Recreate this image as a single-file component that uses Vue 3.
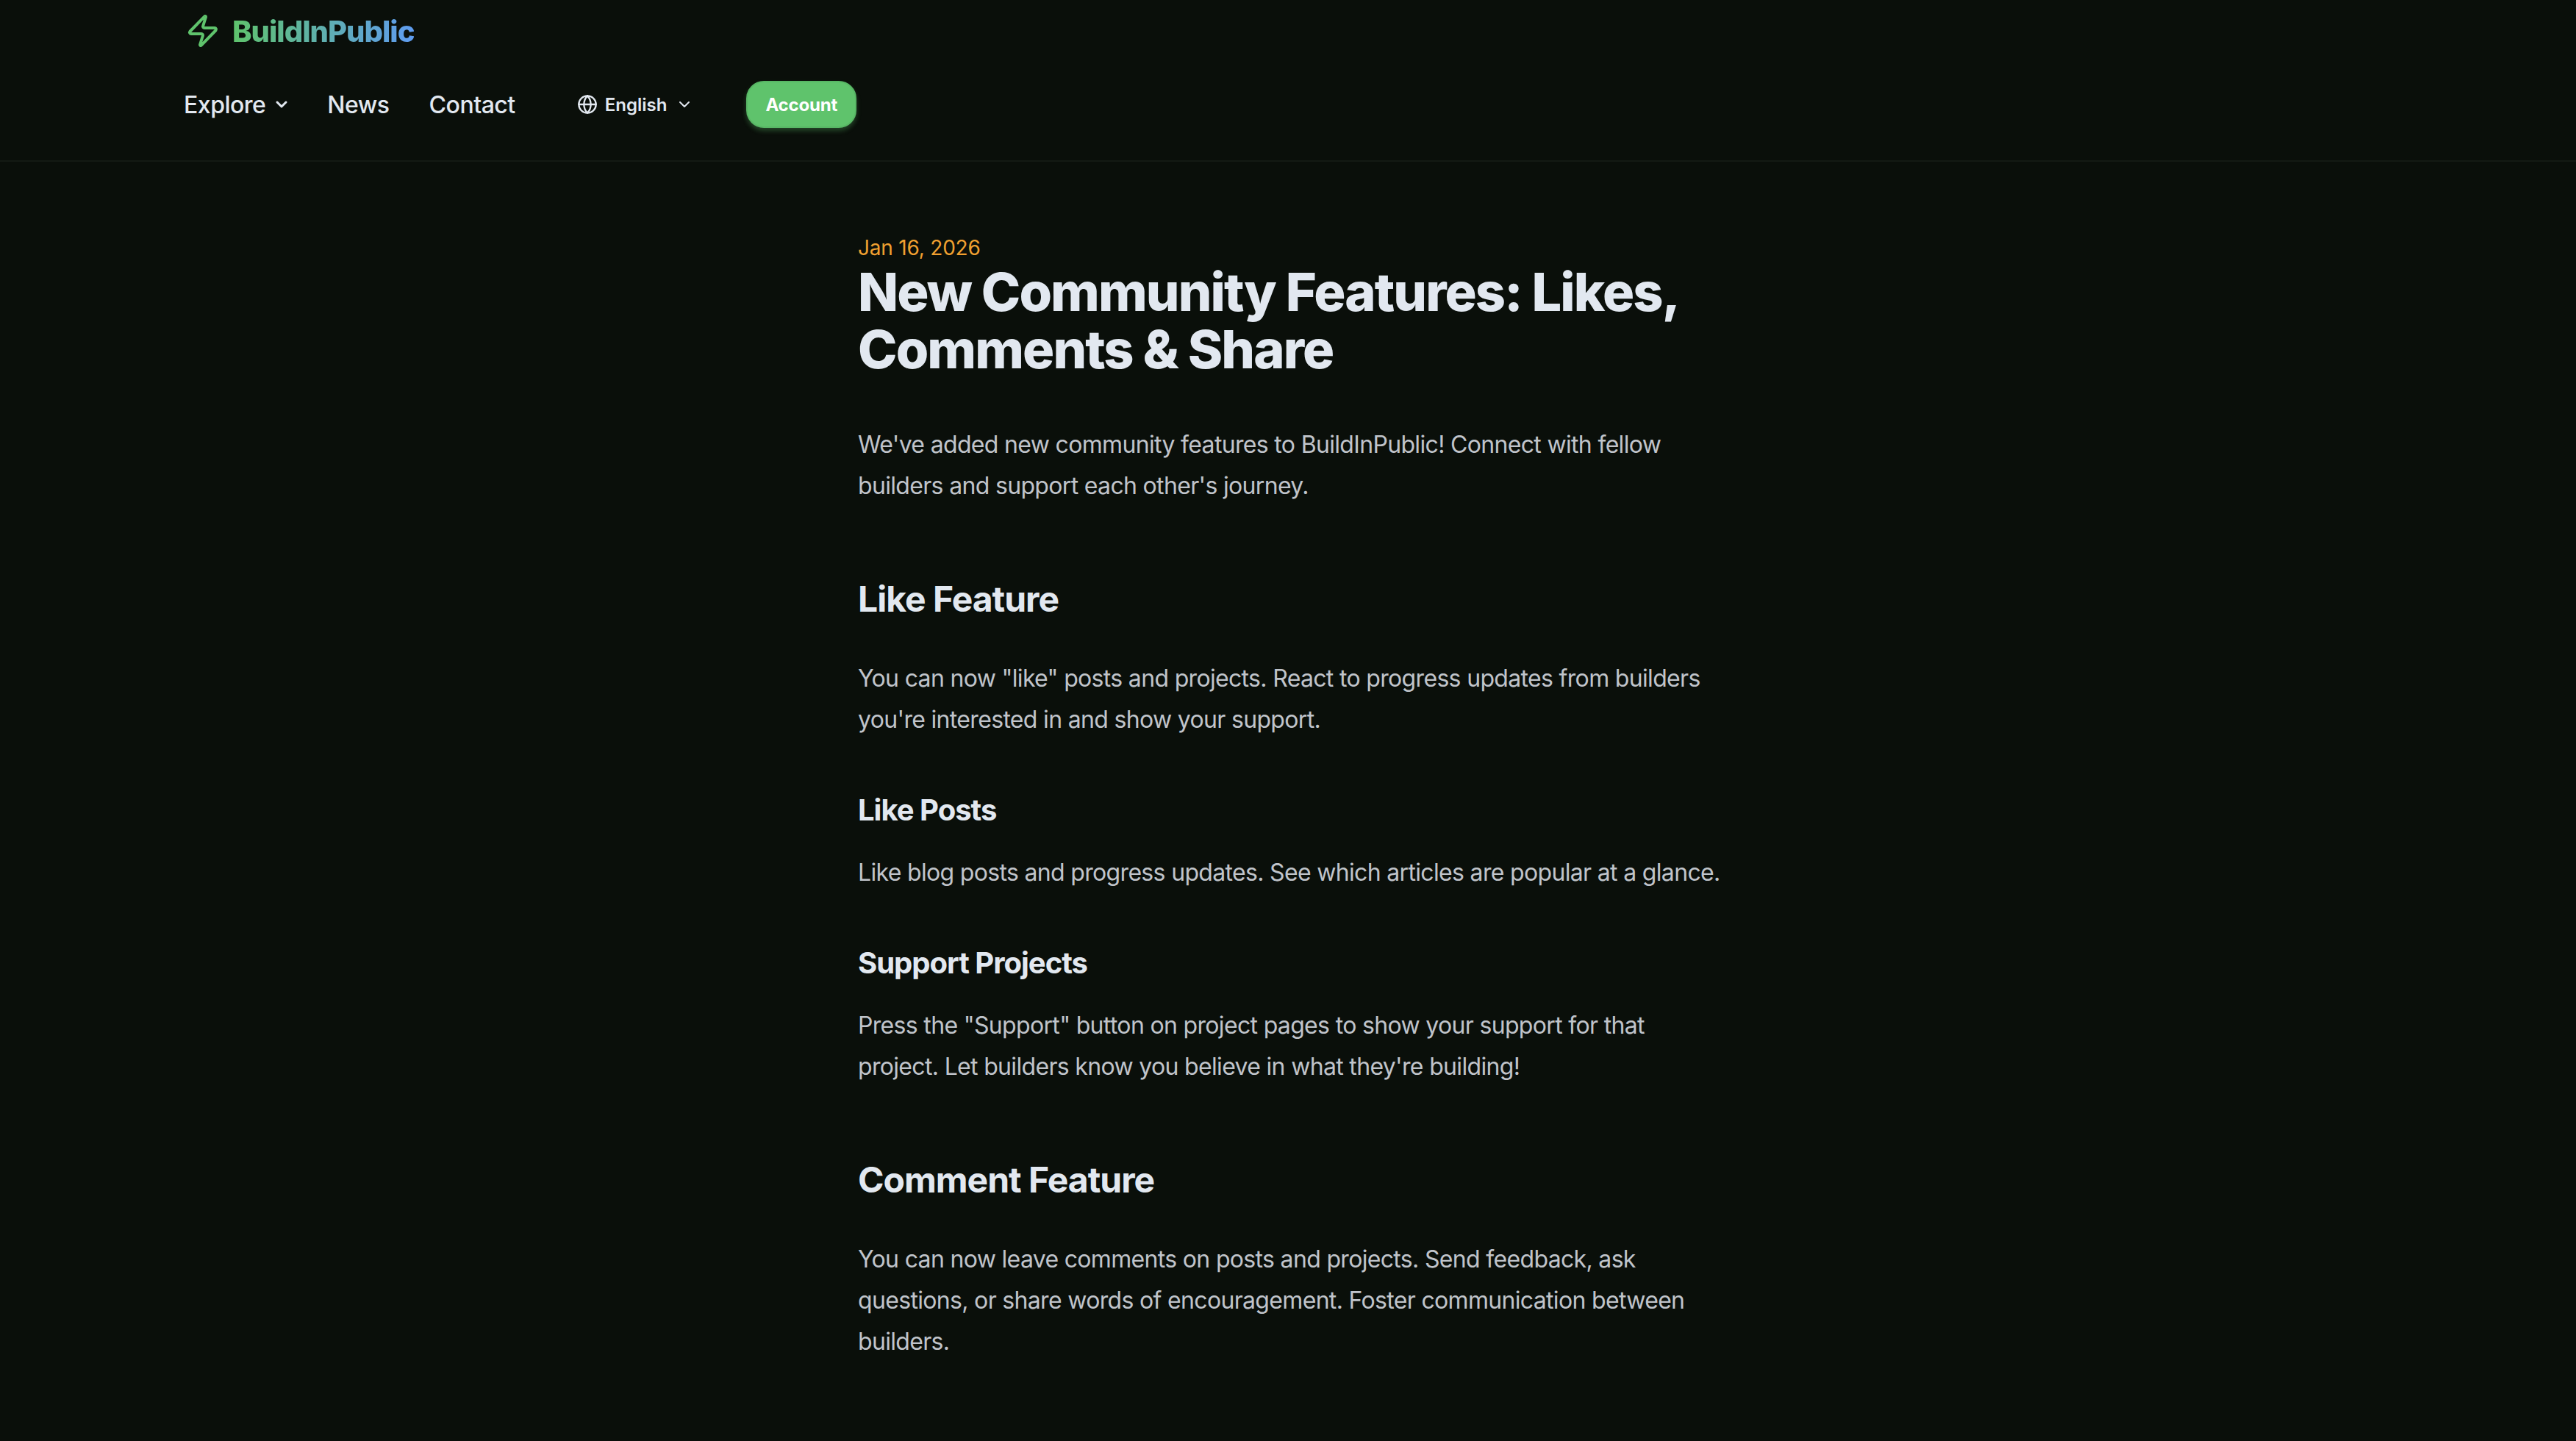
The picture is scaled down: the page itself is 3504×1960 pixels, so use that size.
<script setup>
const navLinks = ['News', 'Contact']
</script>

<template>
  <div class="page">
    <header class="site-header">
      <a class="logo">
        <svg class="bolt" viewBox="0 0 24 24" fill="none" stroke="currentColor" stroke-width="2" stroke-linecap="round" stroke-linejoin="round">
          <path d="M4 14a1 1 0 0 1-.78-1.63l9.9-10.2a.5.5 0 0 1 .86.46l-1.92 6.02A1 1 0 0 0 13 10h7a1 1 0 0 1 .78 1.63l-9.9 10.2a.5.5 0 0 1-.86-.46l1.92-6.02A1 1 0 0 0 11 14z" />
        </svg>
        <span class="logo-text">BuildInPublic</span>
      </a>
      <nav class="nav">
        <a class="nav-link explore">
          Explore
          <svg class="chev" viewBox="0 0 24 24" fill="none" stroke="currentColor" stroke-width="3" stroke-linecap="round" stroke-linejoin="round">
            <path d="m6 9 6 6 6-6" />
          </svg>
        </a>
        <a v-for="link in navLinks" :key="link" class="nav-link">{{ link }}</a>
        <button class="lang">
          <svg class="globe" viewBox="0 0 24 24" fill="none" stroke="currentColor" stroke-width="2" stroke-linecap="round" stroke-linejoin="round">
            <circle cx="12" cy="12" r="10" />
            <path d="M12 2a14.5 14.5 0 0 0 0 20 14.5 14.5 0 0 0 0-20" />
            <path d="M2 12h20" />
          </svg>
          English
          <svg class="chev-sm" viewBox="0 0 24 24" fill="none" stroke="currentColor" stroke-width="2" stroke-linecap="round" stroke-linejoin="round">
            <path d="m6 9 6 6 6-6" />
          </svg>
        </button>
        <button class="account">Account</button>
      </nav>
    </header>

    <main class="article">
      <time class="date">Jan 16, 2026</time>
      <h1>New Community Features: Likes, Comments &amp; Share</h1>
      <p class="intro">We've added new community features to BuildInPublic! Connect with fellow builders and support each other's journey.</p>

      <h2>Like Feature</h2>
      <p>You can now "like" posts and projects. React to progress updates from builders you're interested in and show your support.</p>

      <h3>Like Posts</h3>
      <p>Like blog posts and progress updates. See which articles are popular at a glance.</p>

      <h3>Support Projects</h3>
      <p>Press the "Support" button on project pages to show your support for that project. Let builders know you believe in what they're building!</p>

      <h2>Comment Feature</h2>
      <p>You can now leave comments on posts and projects. Send feedback, ask questions, or share words of encouragement. Foster communication between builders.</p>
    </main>
  </div>
</template>

<style>
html, body {
  margin: 0;
  background: #0a0f0a;
}
</style>

<style scoped>
.page {
  height: 1960px;
  overflow: hidden;
  background: #0a0f0a;
  font-family: Inter, sans-serif;
  color: #e2e8f0;
}
.site-header {
  height: 220px;
  box-sizing: border-box;
  padding-left: 250px;
  border-bottom: 2px solid #141a14;
}
.logo {
  display: flex;
  align-items: center;
  height: 84px;
  padding-left: 2px;
  gap: 16px;
}
.bolt {
  width: 48px;
  height: 48px;
  color: #5fc36c;
}
.logo-text {
  font-size: 40px;
  font-weight: 800;
  letter-spacing: -1px;
  background: linear-gradient(90deg, #5fc36c, #5f9cf0);
  -webkit-background-clip: text;
  background-clip: text;
  color: transparent;
}
.nav {
  display: flex;
  align-items: center;
  height: 84px;
  margin-top: 16px;
}
.nav-link {
  font-size: 32px;
  font-weight: 500;
  letter-spacing: -0.5px;
  color: #e2e8f0;
  margin-right: 54px;
}
.explore {
  display: flex;
  align-items: center;
  gap: 10px;
  margin-right: 50px;
}
.chev {
  width: 24px;
  height: 24px;
}
.lang {
  display: flex;
  align-items: center;
  gap: 10px;
  margin-left: 30px;
  padding: 0;
  background: none;
  border: 0;
  font-family: inherit;
  font-size: 24px;
  font-weight: 600;
  color: #e2e8f0;
}
.globe {
  width: 28px;
  height: 28px;
}
.chev-sm {
  width: 24px;
  height: 24px;
  margin-left: 2px;
}
.account {
  margin-left: 72px;
  height: 64px;
  padding: 0 24px;
  border: 2px solid #58b765;
  border-radius: 24px;
  background: #5fc36c;
  box-shadow: 0 4px 6px rgba(95, 195, 108, 0.3);
  font-family: inherit;
  font-size: 24px;
  font-weight: 700;
  letter-spacing: -0.2px;
  color: #fff;
}
.article {
  width: 1180px;
  margin-left: 1167px;
  padding-top: 96px;
}
.date {
  display: block;
  font-size: 28px;
  line-height: 42px;
  letter-spacing: -0.2px;
  color: #f0a030;
}
h1 {
  margin: 0 0 63px;
  font-size: 72px;
  line-height: 78px;
  font-weight: 800;
  letter-spacing: -1.9px;
  color: #e2e8f0;
}
p {
  margin: 0;
  font-size: 32px;
  line-height: 56px;
  letter-spacing: -0.67px;
  color: #c0c4ca;
}
h2 {
  margin: 94px 0 48px;
  font-size: 48px;
  line-height: 64px;
  font-weight: 700;
  letter-spacing: -1px;
  color: #e2e8f0;
}
h3 {
  margin: 67px 0 29px;
  font-size: 40px;
  line-height: 56px;
  font-weight: 700;
  letter-spacing: -1px;
  color: #e2e8f0;
}
</style>
